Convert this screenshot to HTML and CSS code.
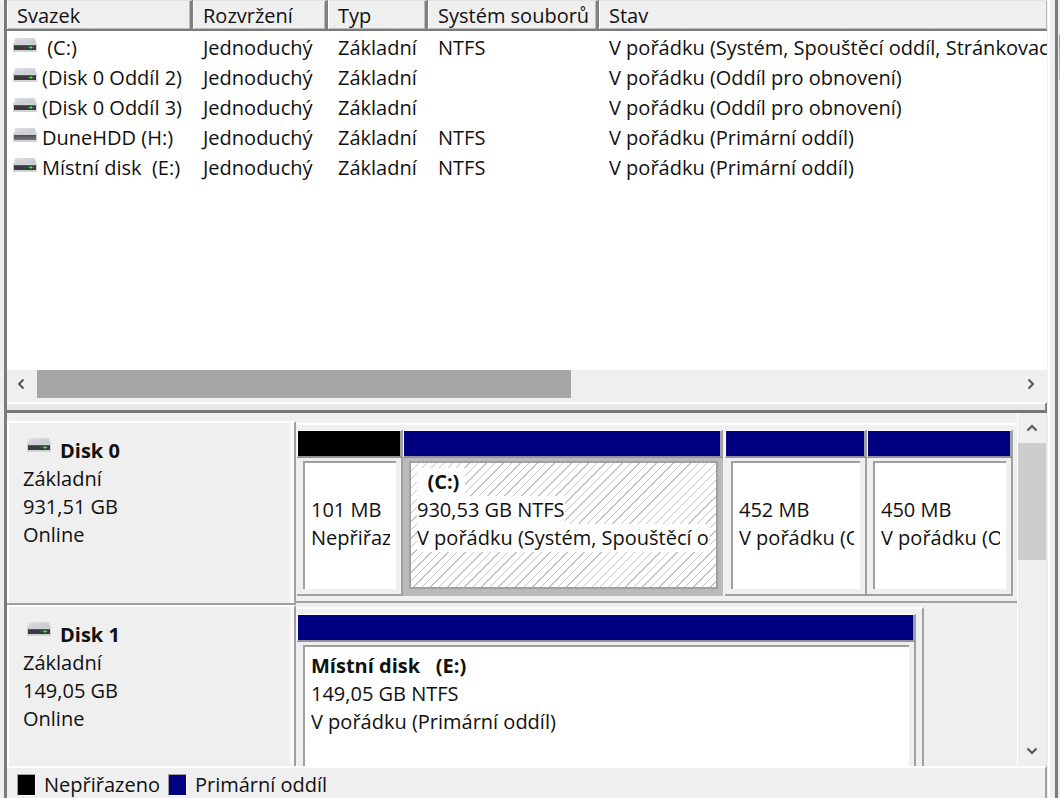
FILE: index.html
```html
<!DOCTYPE html>
<html lang="cs">
<head>
  <meta charset="UTF-8">
  <title>Správa disků</title>
  <meta name="viewport" content="width=device-width, initial-scale=1.0">
  <link rel="stylesheet" href="styles.css">
</head>
<body>
  <svg class="symbols" aria-hidden="true">
    <linearGradient id="lid" x1="0" y1="0" x2="1" y2="1">
      <stop offset="0" stop-color="#dfe1e5"/>
      <stop offset="1" stop-color="#c3c6cb"/>
    </linearGradient>
    <linearGradient id="slot" x1="0" y1="0" x2="0" y2="1">
      <stop offset="0" stop-color="#4d4d4d"/>
      <stop offset="1" stop-color="#777"/>
    </linearGradient>
    <symbol id="drive" viewBox="0 0 24 14">
      <path d="M2 0h20l1 5H1z" fill="url(#lid)"/>
      <path d="M0 5h24v9H0z" fill="#cfd2d8"/>
      <path d="M1 7h22v5H1z" fill="#3b3b3b"/>
      <path d="M1 7h22v1H1z" fill="#555"/>
      <path d="M15 9h6v1h-6z" fill="#1f9a2a"/>
      <path d="M17 8h2v3h-2z" fill="#1f9a2a"/>
      <path d="M17 9h2v1h-2z" fill="#4dff55"/>
    </symbol>
    <symbol id="drive-off" viewBox="0 0 24 14">
      <path d="M2 0h20l1 6H1z" fill="url(#lid)"/>
      <path d="M0 5h24v9H0z" fill="#cfd2d8"/>
      <path d="M1 7h22v5H1z" fill="url(#slot)"/>
    </symbol>
  </svg>

  <div class="window">
    <div class="volumes">
      <table>
        <colgroup>
          <col class="col-volume">
          <col class="col-layout">
          <col class="col-type">
          <col class="col-fs">
          <col>
        </colgroup>
        <thead>
          <tr><th>Svazek</th><th>Rozvržení</th><th>Typ</th><th>Systém souborů</th><th>Stav</th></tr>
        </thead>
        <tbody>
          <tr>
            <td><svg class="drive"><use href="#drive"/></svg>&nbsp;(C:)</td>
            <td>Jednoduchý</td><td>Základní</td><td>NTFS</td>
            <td>V pořádku (Systém, Spouštěcí oddíl, Stránkovací soubor)</td>
          </tr>
          <tr>
            <td><svg class="drive"><use href="#drive"/></svg>(Disk 0 Oddíl 2)</td>
            <td>Jednoduchý</td><td>Základní</td><td></td>
            <td>V pořádku (Oddíl pro obnovení)</td>
          </tr>
          <tr>
            <td><svg class="drive"><use href="#drive"/></svg>(Disk 0 Oddíl 3)</td>
            <td>Jednoduchý</td><td>Základní</td><td></td>
            <td>V pořádku (Oddíl pro obnovení)</td>
          </tr>
          <tr>
            <td><svg class="drive"><use href="#drive-off"/></svg>DuneHDD (H:)</td>
            <td>Jednoduchý</td><td>Základní</td><td>NTFS</td>
            <td>V pořádku (Primární oddíl)</td>
          </tr>
          <tr>
            <td><svg class="drive"><use href="#drive"/></svg>Místní disk&nbsp; (E:)</td>
            <td>Jednoduchý</td><td>Základní</td><td>NTFS</td>
            <td>V pořádku (Primární oddíl)</td>
          </tr>
        </tbody>
      </table>
    </div>

    <div class="hscroll">
      <button type="button" aria-label="Posunout vlevo"><svg viewBox="0 0 12 12"><path d="M7.500 1.500 3 6l4.500 4.500"/></svg></button>
      <div class="track"><div class="thumb"></div></div>
      <button type="button" aria-label="Posunout vpravo"><svg viewBox="0 0 12 12"><path d="M2.500 1.500 7 6l-4.500 4.500"/></svg></button>
    </div>
    <div class="splitter"></div>

    <div class="graph">
      <div class="disks">
        <section class="disk">
          <div class="disk-info">
            <h2><svg class="drive"><use href="#drive"/></svg>Disk 0</h2>
            <p>Základní</p>
            <p>931,51 GB</p>
            <p>Online</p>
          </div>
          <div class="partitions four">
            <div class="partition unallocated">
              <div class="bar"></div>
              <div class="body"><div class="box">
                <p>&nbsp;</p>
                <p>101 MB</p>
                <p>Nepřiřazeno</p>
              </div></div>
            </div>
            <div class="partition selected">
              <div class="bar"></div>
              <div class="body"><div class="box">
                <p><strong>&nbsp; (C:)&nbsp;</strong></p>
                <p>930,53 GB NTFS</p>
                <p>V pořádku (Systém, Spouštěcí oddíl)</p>
              </div></div>
            </div>
            <div class="partition">
              <div class="bar"></div>
              <div class="body"><div class="box">
                <p>&nbsp;</p>
                <p>452 MB</p>
                <p>V pořádku (Oddíl</p>
              </div></div>
            </div>
            <div class="partition">
              <div class="bar"></div>
              <div class="body"><div class="box">
                <p>&nbsp;</p>
                <p>450 MB</p>
                <p>V pořádku (Oddíl</p>
              </div></div>
            </div>
          </div>
        </section>

        <section class="disk">
          <div class="disk-info">
            <h2><svg class="drive"><use href="#drive"/></svg>Disk 1</h2>
            <p>Základní</p>
            <p>149,05 GB</p>
            <p>Online</p>
          </div>
          <div class="partitions single">
            <div class="partition">
              <div class="bar"></div>
              <div class="body"><div class="box">
                <p><strong>Místní disk&nbsp;&nbsp; (E:)</strong></p>
                <p>149,05 GB NTFS</p>
                <p>V pořádku (Primární oddíl)</p>
              </div></div>
            </div>
          </div>
        </section>
      </div>

      <div class="vscroll">
        <button type="button" aria-label="Posunout nahoru"><svg viewBox="0 0 12 12"><path d="M1.500 8.500 6 4l4.500 4.500"/></svg></button>
        <div class="track"><div class="thumb"></div></div>
        <button type="button" aria-label="Posunout dolů"><svg viewBox="0 0 12 12"><path d="M1.500 3.500 6 8l4.500-4.500"/></svg></button>
      </div>
    </div>

    <div class="legend">
      <span class="swatch black"></span><span>Nepřiřazeno</span>
      <span class="swatch navy"></span><span>Primární oddíl</span>
    </div>
  </div>
</body>
</html>
```

FILE: styles.css
```css
* {
  box-sizing: border-box;
}
body {
  margin: 0;
  background: linear-gradient(#8ba3c4, #b4c4d8) right 35px / 1px 45px no-repeat #efefef;
  font-family: "Open Sans", "Noto Sans", sans-serif;
  font-size: 20px;
  line-height: 28px;
  color: #111;
}
h2, p {
  margin: 0;
  font-size: 20px;
  white-space: nowrap;
}
.symbols {
  position: absolute;
  width: 0;
  height: 0;
}
.window {
  display: flex;
  flex-direction: column;
  height: 100vh;
  margin: 0 2px 0 4px;
  padding-right: 8px;
  border-left: 3px solid #7b7b7b;
  border-right: 3px solid #7b7b7b;
  background: linear-gradient(#fff, #fff) right 5px top / 2px 100% no-repeat #efefef;
  overflow: hidden;
}
.drive {
  width: 24px;
  height: 14px;
}

/* volume list */
.volumes {
  flex: 0 0 370px;
  background: #fff;
  overflow: hidden;
}
table {
  width: 100%;
  table-layout: fixed;
  border-collapse: separate;
  border-spacing: 0;
}
.col-volume { width: 186px; }
.col-layout { width: 135px; }
.col-type { width: 100px; }
.col-fs { width: 171px; }
th, td {
  padding: 0 0 0 10px;
  text-align: left;
  font-weight: normal;
  white-space: nowrap;
  overflow: hidden;
}
th {
  height: 31px;
  padding-top: 2px;
  line-height: 26px;
  background: #efefef;
  border-top: 1px solid #e2e2e2;
  border-right: 3px solid #808080;
  border-bottom: 2px solid #7b7b7b;
  box-shadow: inset 1px 0 #fff, inset -1px -1px #bbb;
}
th:last-child {
  border-right: 0;
}
td {
  height: 30px;
  line-height: 30px;
}
tbody tr:first-child td {
  height: 32px;
  padding-top: 2px;
}
td:first-child {
  padding-left: 6px;
}
td .drive {
  margin-right: 5px;
  vertical-align: 3px;
}

/* scrollbars */
.hscroll, .vscroll {
  display: flex;
  background: #efefef;
}
.hscroll {
  flex: 0 0 32px;
  padding-bottom: 4px;
}
.vscroll {
  flex: 0 0 30px;
  flex-direction: column;
  border-left: 1px solid #fff;
  border-right: 1px solid #e2e2e2;
}
.track {
  flex: 1;
}
.hscroll .thumb {
  width: 54.5%;
  height: 28px;
  background: #a6a6a6;
}
.vscroll .thumb {
  height: 40%;
  background: #cdcdcd;
}
button {
  display: flex;
  flex: 0 0 30px;
  align-items: center;
  justify-content: center;
  padding: 0;
  border: 0;
  background: none;
}
button svg {
  width: 12px;
  height: 12px;
  fill: none;
  stroke: #555;
  stroke-width: 2;
}
.splitter {
  flex: 0 0 11px;
  border-top: 2px solid #fff;
  border-right: 2px solid #808080;
  border-bottom: 3px solid #757575;
  background: #e8e8e8;
}

/* graphical view */
.graph {
  display: flex;
  flex: 1;
  min-height: 0;
}
.disks {
  flex: 1;
  min-width: 0;
  padding-top: 8px;
  overflow: hidden;
}
.disk {
  display: flex;
  height: 184px;
}
.disk-info {
  flex: 0 0 289px;
  padding: 14px 0 0 16px;
  border-top: 2px solid #fff;
  border-right: 2px solid #a0a0a0;
  border-bottom: 2px solid #a0a0a0;
  box-shadow: inset 2px 0 #fff, inset -4px 0 #f8f8f8;
}
.disk-info .drive {
  margin: 0 9px 0 4px;
  vertical-align: 6px;
}
.partitions {
  display: grid;
  flex: 1;
  min-width: 0;
  height: 180px;
  margin-top: 2px;
  padding: 5px 4px 5px 1px;
  border-top: 2px solid #fff;
  border-bottom: 2px solid #a0a0a0;
}
.four {
  grid-template-columns: 106fr 322fr 142fr 146fr;
}
.single {
  flex: 0 1 628px;
  padding-right: 6px;
  border-right: 2px solid #a0a0a0;
}
.partition {
  display: flex;
  flex-direction: column;
  min-width: 0;
}
.bar {
  flex: 0 0 28px;
  border: 1px solid #fff;
  border-right: 3px solid #a0a0a0;
  border-bottom: 2px solid #9090a0;
  background: #000080;
}
.unallocated .bar {
  background: #000;
}
.body {
  flex: 1;
  min-height: 0;
  padding: 3px 5px 5px 6px;
  border-right: 2px solid #a0a0a0;
  border-bottom: 2px solid #a0a0a0;
}
.box {
  height: 100%;
  padding: 5px 6px 0;
  border-top: 2px solid #a0a0a0;
  border-left: 2px solid #a0a0a0;
  background: #fff;
}
.box p {
  overflow: hidden;
}
.selected .bar, .selected .body {
  margin-right: 2px;
}
.selected .body {
  padding-right: 3px;
  border-color: #bababa;
  background: #bababa;
}
.selected .box {
  border: 2px solid #a0a0a0;
  background: repeating-linear-gradient(135deg, #fff 0 5px, #c4c4c4 5px 6px);
}
.selected p {
  width: fit-content;
  max-width: 100%;
  background: #fff;
}

.legend {
  display: flex;
  flex: 0 0 32px;
  align-items: center;
  gap: 8px;
  padding: 4px 0 0 10px;
  border-top: 2px solid #fff;
  border-right: 2px solid #a0a0a0;
  line-height: 26px;
}
.swatch {
  width: 19px;
  height: 22px;
  border: 1px solid #fff;
  border-top-color: #a0a0a0;
  border-left-color: #a0a0a0;
}
.black { background: #000; }
.navy { background: #000080; }
```
